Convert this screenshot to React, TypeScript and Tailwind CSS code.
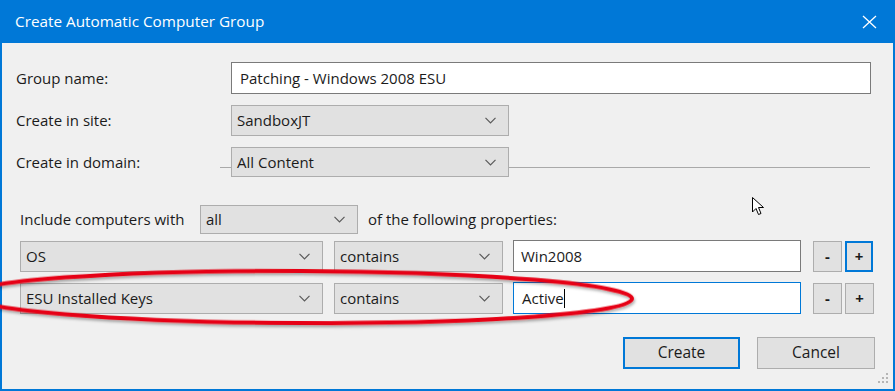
import React from "react";

const font = { fontFamily: '"Open Sans", "Noto Sans", sans-serif' };

function Chevron() {
  return (
    <svg width="11" height="7" viewBox="0 0 11 7" className="shrink-0">
      <path d="M0.5 0.8 L5.5 5.8 L10.5 0.8" fill="none" stroke="#5a5a5a" strokeWidth="1.2" />
    </svg>
  );
}

function Select({ value, className }: { value: string; className: string }) {
  return (
    <div
      className={
        "flex items-center justify-between bg-[#e1e1e1] border border-[#adadad] pl-[5px] pr-[12px] text-[15px] text-[#1b1b1b] " +
        className
      }
    >
      <span>{value}</span>
      <Chevron />
    </div>
  );
}

function SmallBtn({ label, focused }: { label: string; focused?: boolean }) {
  return (
    <div
      className={
        "flex items-center justify-center h-[31px] bg-[#e1e1e1] text-[15px] text-[#1b1b1b] font-bold " +
        (focused ? "border-2 border-[#0078d7] w-[28px]" : "border border-[#adadad] w-[29px]")
      }
    >
      {label}
    </div>
  );
}

export default function App() {
  return (
    <div className="w-[895px] h-[391px] bg-white relative overflow-hidden" style={font}>
      <div className="w-[895px] h-[391px] border-x-2 border-b-2 border-[#0078d7] bg-[#f0f0f0] flex flex-col">
        {/* Title bar */}
        <div className="h-[43px] bg-[#0078d7] flex items-center justify-between pl-[13px] pr-[16px] shrink-0">
          <span className="text-white text-[15.3px]">Create Automatic Computer Group</span>
          <svg width="15" height="14" viewBox="0 0 15 14">
            <path d="M1 1 L14 13 M14 1 L1 13" stroke="white" strokeWidth="1.3" fill="none" />
          </svg>
        </div>

        <div className="flex flex-col pl-[14px] text-[15px] text-[#1b1b1b]">
          {/* Group name */}
          <div className="flex items-center mt-[19px]">
            <div className="w-[215px]">Group name:</div>
            <div className="w-[640px] h-[32px] bg-white border border-[#7a7a7a] flex items-center pl-[8px]">
              Patching - Windows 2008 ESU
            </div>
          </div>

          {/* Site */}
          <div className="flex items-center mt-[11px]">
            <div className="w-[215px]">Create in site:</div>
            <Select value="SandboxJT" className="w-[278px] h-[31px]" />
          </div>

          {/* Domain */}
          <div className="flex items-start mt-[11px] h-[30px]">
            <div className="w-[204px] h-[30px] flex items-center">Create in domain:</div>
            <div className="w-[11px] h-px bg-[#a9a9a9] mt-[20px]" />
            <Select value="All Content" className="w-[278px] h-[30px]" />
            <div className="w-[361px] h-px bg-[#a9a9a9] mt-[20px]" />
          </div>

          {/* Include */}
          <div className="flex items-center mt-[28px] pl-[4px]">
            <div className="w-[180px]">Include computers with</div>
            <Select value="all" className="w-[158px] h-[29px]" />
            <div className="ml-[10px]">of the following properties:</div>
          </div>

          {/* OS row */}
          <div className="flex items-center mt-[6px] pl-[4px]">
            <Select value="OS" className="w-[303px] h-[31px]" />
            <Select value="contains" className="w-[169px] h-[31px] ml-[11px]" />
            <div className="w-[288px] h-[32px] ml-[10px] bg-white border-[1.5px] border-[#7a7a7a] flex items-center pl-[7px]">
              Win2008
            </div>
            <div className="ml-[12px]">
              <SmallBtn label="-" />
            </div>
            <div className="ml-[3px]">
              <SmallBtn label="+" focused />
            </div>
          </div>

          {/* ESU row */}
          <div className="flex items-center mt-[10px] pl-[4px]">
            <Select value="ESU Installed Keys" className="w-[303px] h-[31px]" />
            <Select value="contains" className="w-[169px] h-[31px] ml-[11px]" />
            <div className="w-[288px] h-[32px] ml-[10px] bg-white border border-[#0078d7] flex items-center pl-[8px]">
              <span>Active</span>
              <span className="w-px h-[19px] bg-black" />
            </div>
            <div className="ml-[12px]">
              <SmallBtn label="-" />
            </div>
            <div className="ml-[3px]">
              <SmallBtn label="+" />
            </div>
          </div>

          {/* Buttons */}
          <div className="flex items-center mt-[23px] pl-[607px]">
            <div className="w-[117px] h-[32px] border-2 border-[#0078d7] bg-[#e1e1e1] flex items-center justify-center text-[15.5px]">
              Create
            </div>
            <div className="w-[118px] h-[32px] ml-[17px] border border-[#adadad] bg-[#e1e1e1] flex items-center justify-center text-[15.5px]">
              Cancel
            </div>
          </div>
        </div>
      </div>

      {/* resize grip */}
      <svg className="absolute left-[877px] top-[372px]" width="12" height="12" viewBox="0 0 12 12">
        {[
          [8, 0],
          [4, 4],
          [8, 4],
          [0, 8],
          [4, 8],
          [8, 8],
        ].map(([x, y], i) => (
          <rect key={i} x={x + 1} y={y + 1} width="2" height="2" fill="#b5b5b5" />
        ))}
      </svg>

      {/* mouse cursor */}
      <svg className="absolute left-[751px] top-[196px]" width="14" height="21" viewBox="0 0 14 21">
        <path
          d="M1.5 1.5 L1.5 16 L5 12.5 L7.5 18.5 L10 17.5 L7.5 11.5 L12.5 11.5 Z"
          fill="white"
          stroke="black"
          strokeWidth="1"
          strokeLinejoin="miter"
        />
      </svg>

      {/* red annotation ellipse */}
      <svg className="absolute left-0 top-0 pointer-events-none" width="895" height="391" viewBox="0 0 895 391">
        <defs>
          <filter id="sh" x="-10%" y="-50%" width="120%" height="200%">
            <feDropShadow dx="1" dy="2" stdDeviation="1.5" floodColor="#000" floodOpacity="0.35" />
          </filter>
        </defs>
        <ellipse
          cx="300"
          cy="297"
          rx="332"
          ry="26"
          fill="none"
          stroke="#e60012"
          strokeWidth="4"
          filter="url(#sh)"
          transform="rotate(0.3 300 297)"
        />
      </svg>
    </div>
  );
}
